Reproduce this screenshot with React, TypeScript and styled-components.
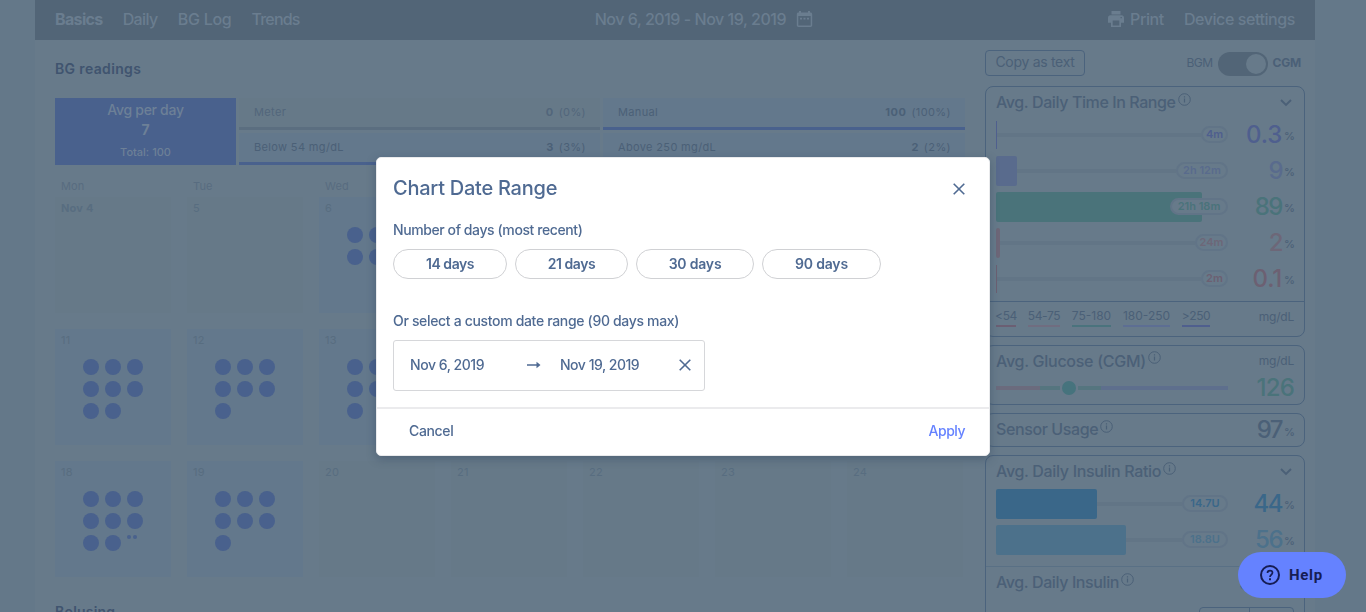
import React from "react";
import styled, { createGlobalStyle } from "styled-components";

const c = {
  page: "#647889",
  panel: "#677a8a",
  header: "#526577",
  headerText: "#6a7d8f",
  ink: "#4b6077",
  heading: "#40546f",
  muted: "#586c80",
  blue: "#49618d",
  tint: "#63788c",
  empty: "#667988",
  line: "#617487",
  border: "#4b637d",
  modal: "#4f6a92",
};

const Global = createGlobalStyle`
  * { box-sizing: border-box; }
  html, body { margin: 0; height: 612px; overflow: hidden; background: ${c.page}; }
  body { font-family: Inter, "Liberation Sans", sans-serif; color: ${c.ink}; }
  button { font: inherit; color: inherit; background: none; border: 0; padding: 0; margin: 0; }
`;

const Text = styled.span<{ $s?: number; $w?: number; $ls?: number; $c?: string; $lh?: number; $up?: number }>`
  font-size: ${(p) => p.$s ?? 14}px;
  font-weight: ${(p) => p.$w ?? 400};
  letter-spacing: ${(p) => p.$ls ?? 0}px;
  line-height: ${(p) => p.$lh ?? 20}px;
  color: ${(p) => p.$c ?? "inherit"};
  padding-bottom: ${(p) => (p.$up ?? 0) * 2}px;
  white-space: nowrap;
  display: block;
`;

const Shell = styled.div`
  width: 1280px;
  height: 612px;
  margin-left: 35px;
  background: ${c.panel};
  overflow: hidden;
`;

const Header = styled.header`
  height: 40px;
  padding: 0 20px;
  display: flex;
  justify-content: space-between;
  align-items: center;
  background: ${c.header};
  color: ${c.headerText};
`;
const Nav = styled.nav`
  display: flex;
  align-items: center;
  gap: 20px;
`;
const DateNav = styled.div`
  display: flex;
  align-items: center;
  gap: 10px;
  svg { margin-bottom: 3px; }
`;
const PrintLink = styled.div`
  display: flex;
  align-items: center;
  gap: 6px;
  svg { margin-bottom: 2px; }
`;

const Body = styled.div`
  display: grid;
  grid-template-columns: 910px 320px;
  column-gap: 20px;
  padding: 0 10px 0 20px;
`;
const Main = styled.main`
  display: flex;
  flex-direction: column;
`;
const Section = styled.h2<{ $top: number }>`
  margin: ${(p) => p.$top}px 0 19px;
  font-weight: inherit;
`;
const Stats = styled.div`
  display: grid;
  grid-template-columns: 181px 361px 362px;
  grid-template-rows: 32px 32px;
  gap: 3px;
`;
const Average = styled.div`
  grid-row: span 2;
  display: flex;
  flex-direction: column;
  align-items: center;
  padding-top: 2px;
  background: ${c.blue};
  color: #6d8097;
`;
const Stat = styled.div<{ $off?: boolean }>`
  display: flex;
  align-items: center;
  justify-content: space-between;
  padding: 0 14px 1px 15px;
  border-bottom: 3px solid ${(p) => (p.$off ? "#5b6e80" : c.blue)};
  background: ${(p) => (p.$off ? c.empty : c.tint)};
  color: ${(p) => (p.$off ? "#52667b" : c.ink)};
`;
const StatValue = styled.div`
  display: flex;
  gap: 5px;
`;
const Week = styled.div`
  display: grid;
  grid-template-columns: repeat(7, 116px);
  column-gap: 16px;
`;
const DayNames = styled(Week)`
  margin-top: 13px;
  height: 19px;
  padding-left: 6px;
  color: ${c.muted};
`;
const Weeks = styled.div`
  display: grid;
  row-gap: 16px;
`;
const Day = styled.div<{ $on: boolean }>`
  height: 116px;
  padding: 3px 6px;
  background: ${(p) => (p.$on ? c.tint : c.empty)};
  color: #586d80;
`;
const Dots = styled.div`
  display: grid;
  grid-template-columns: repeat(3, 16px);
  gap: 6px;
  margin: 11px 0 0 22px;
`;
const Dot = styled.i`
  width: 16px;
  height: 16px;
  border-radius: 50%;
  background: ${c.blue};
`;
const MiniDots = styled.div`
  display: flex;
  gap: 2px;
`;
const MiniDot = styled(Dot)`
  width: 4px;
  height: 4px;
`;

const Side = styled.aside`
  display: flex;
  flex-direction: column;
  gap: 8px;
  padding-top: 10px;
`;
const Tools = styled.div`
  display: flex;
  justify-content: space-between;
  height: 28px;
  padding-right: 4px;
`;
const CopyButton = styled.button`
  width: 100px;
  height: 26px;
  border: 1px solid ${c.border};
  border-radius: 4px;
  display: flex;
  align-items: center;
  justify-content: center;
`;
const SwitchRow = styled.div`
  display: flex;
  align-items: center;
  gap: 5px;
  height: 26px;
`;
const Track = styled.div`
  width: 50px;
  height: 24px;
  margin-top: 2px;
  border-radius: 12px;
  padding: 2px;
  display: flex;
  justify-content: flex-end;
  background: ${c.header};
`;
const Knob = styled.i`
  width: 20px;
  height: 20px;
  border-radius: 50%;
  background: ${c.panel};
`;
const Card = styled.section<{ $h: number }>`
  height: ${(p) => p.$h}px;
  flex: none;
  border: 1px solid ${c.border};
  border-radius: 8px;
`;
const CardHead = styled.div<{ $h?: number; $r?: number }>`
  height: ${(p) => p.$h ?? 32}px;
  padding: 0 ${(p) => p.$r ?? 10}px 0 10px;
  display: flex;
  align-items: center;
  justify-content: space-between;
`;
const TitleWrap = styled.div`
  display: flex;
  align-items: center;
  gap: 2px;
  svg { margin-bottom: 7px; }
`;
const Bars = styled.div`
  display: grid;
  row-gap: 6px;
  padding: 0 10px;
`;
const BarRow = styled.div`
  height: 30px;
  display: grid;
  grid-template-columns: 232px 1fr;
`;
const BarTrack = styled.div`
  display: flex;
  align-items: center;
`;
const BarFill = styled.div<{ $w: number; $c: string }>`
  width: ${(p) => p.$w}px;
  height: ${(p) => (p.$w < 2 ? 28 : 30)}px;
  flex: none;
  border-radius: ${(p) => (p.$w < 2 ? 0 : 2)}px;
  background: ${(p) => p.$c};
`;
const BarLine = styled.div`
  flex: 1;
  height: 4px;
  background: #627586;
`;
const Pill = styled.div<{ $w: number; $over: number; $c: string }>`
  width: ${(p) => p.$w}px;
  height: 17px;
  margin-left: ${(p) => -p.$over}px;
  flex: none;
  border: 2px solid ${c.line};
  border-radius: 9px;
  background: ${c.panel};
  color: ${(p) => p.$c};
  display: flex;
  align-items: center;
  justify-content: center;
`;
const Value = styled.div<{ $c: string }>`
  display: flex;
  justify-content: flex-end;
  color: ${(p) => p.$c};
`;
const PercentSign = styled(Text)`
  width: 10px;
  margin-left: 2px;
  padding-top: 7px;
`;
const Legend = styled.div`
  margin-top: 8px;
  height: 34px;
  padding: 5px 10px 0;
  border-top: 1px solid ${c.border};
  display: flex;
  gap: 12px;
`;
const LegendItem = styled.div<{ $c: string; $w: number }>`
  width: ${(p) => p.$w}px;
  height: 20px;
  border-bottom: 2px solid ${(p) => p.$c};
  display: flex;
  justify-content: center;
`;
const LegendUnit = styled.div`
  margin-left: auto;
`;
const GlucoseRow = styled.div`
  height: 24px;
  padding: 0 10px;
  display: flex;
  align-items: center;
  justify-content: space-between;
`;
const Scale = styled.div`
  width: 232px;
  display: flex;
  align-items: center;
`;
const Segment = styled.i<{ $w: number; $c: string }>`
  width: ${(p) => p.$w}px;
  height: 4px;
  background: ${(p) => p.$c};
`;
const Marker = styled.i`
  width: 14px;
  height: 14px;
  margin: 0 2px;
  border-radius: 50%;
  background: #46737d;
`;
const Insulin = styled.div`
  margin-top: 12px;
  border-top: 1px solid #597085;
`;
const UnitToggle = styled.div`
  width: 95px;
  height: 24px;
  margin: 8px 10px 0 auto;
  border: 1px solid ${c.border};
  border-radius: 4px;
  display: flex;
  justify-content: center;
  &::after { content: ""; border-left: 1px solid ${c.border}; margin-left: 5px; }
`;

const Overlay = styled.div`
  position: fixed;
  inset: 0;
  display: flex;
  justify-content: center;
  align-items: flex-start;
  padding-top: 157px;
`;
const Dialog = styled.div`
  width: 614px;
  height: 299px;
  background: #fff;
  border: 1px solid #e9eaec;
  border-radius: 5px;
  box-shadow: 0 3px 10px rgba(35, 55, 80, 0.35);
  color: ${c.modal};
  display: flex;
  flex-direction: column;
`;
const DialogHead = styled.div`
  height: 62px;
  padding: 0 24px 0 16px;
  display: flex;
  align-items: center;
  justify-content: space-between;
`;
const DialogBody = styled.div`
  padding: 0 16px;
  height: 187px;
`;
const Presets = styled.div`
  display: flex;
  gap: 8px;
  margin: 9px 0 32px;
`;
const Preset = styled.button<{ $w: number }>`
  width: ${(p) => p.$w}px;
  height: 30px;
  border: 1px solid #d0d1d4;
  border-radius: 15px;
  display: flex;
  align-items: center;
  justify-content: center;
`;
const RangeInput = styled.div`
  width: 312px;
  height: 51px;
  margin-top: 9px;
  padding: 0 13px 1px 16px;
  border: 1px solid #d6d7da;
  border-radius: 3px;
  display: grid;
  grid-template-columns: 117px 33px 1fr auto;
  align-items: center;
`;
const DialogFoot = styled.div`
  height: 48px;
  padding: 0 24px 0 32px;
  border-top: 2px solid #ebebed;
  display: flex;
  align-items: center;
  justify-content: space-between;
`;
const HelpButton = styled.button`
  && { background: #6582ff; color: #161d54; padding-left: 22px; }
  position: fixed;
  right: 20px;
  bottom: 14px;
  width: 108px;
  height: 46px;
  border-radius: 23px;
  display: flex;
  align-items: center;
  gap: 9px;
  span { font-family: Roboto, sans-serif; }
`;

const CloseIcon = () => (
  <svg width="12" height="12" viewBox="0 0 12 12" fill="none" stroke={c.modal} strokeWidth="1.6">
    <path d="M.7.7 11.3 11.3M11.3.7.7 11.3" />
  </svg>
);
const ArrowIcon = () => (
  <svg width="14" height="8" viewBox="0 0 14 8" fill={c.modal}>
    <path d="M0 3.300h9.500V.8L13.500 4 9.500 7.200V4.700H0z" />
  </svg>
);
const CalendarIcon = () => (
  <svg width="17" height="18" viewBox="0 0 17 18" fill={c.headerText}>
    <path fillRule="evenodd" d="M3 1h2v1.500h7V1h2v1.500h.5c1 0 1.700.7 1.700 1.700v11.100c0 1-.7 1.700-1.700 1.700h-12c-1 0-1.700-.7-1.700-1.700V4.200c0-1 .7-1.700 1.700-1.700H3zM2.300 6v9.400h12.400V6z" />
    <path d="M4 7.800h2v1.600H4zm3.500 0h2v1.600h-2zm3.500 0h2v1.600h-2z" />
  </svg>
);
const PrintIcon = () => (
  <svg width="16" height="16" viewBox="0 0 16 16">
    <path fill={c.headerText} d="M3.500 0h9v3.400h-9zM2.500 4.300h11A2.500 2.500 0 0 1 16 6.800v5h-3V16H3v-4.200H0v-5a2.500 2.500 0 0 1 2.500-2.500z" />
    <path fill={c.header} d="M4.700 9.500h6.600v5H4.700zM12.500 6h1.400v1.300h-1.400z" />
  </svg>
);
const InfoIcon = () => (
  <svg width="13" height="13" viewBox="0 0 13 13" fill="none" stroke={c.ink}>
    <circle cx="6.500" cy="6.500" r="5.800" />
    <path d="M6.500 5.600v4M6.500 3.200v1.300" strokeWidth="1.200" />
  </svg>
);
const ChevronIcon = () => (
  <svg width="12" height="8" viewBox="0 0 12 8" fill="none" stroke={c.ink} strokeWidth="1.900">
    <path d="m1 1 5 5 5-5" />
  </svg>
);
const HelpIcon = () => (
  <svg width="20" height="20" viewBox="0 0 20 20" fill="none" stroke="#161d54" strokeWidth="2">
    <circle cx="10" cy="10" r="9" />
    <path d="M7.500 8c0-1.500 1.100-2.400 2.500-2.400s2.500.9 2.500 2.200c0 1.900-2.500 2-2.500 4.100" strokeWidth="1.700" />
    <path d="M10 13.300v1.900" />
  </svg>
);

const CardTitle = ({ children, ls = -0.4, up = 1 }: { children: string; ls?: number; up?: number }) => (
  <TitleWrap>
    <Text $s={16} $w={500} $ls={ls} $up={up}>{children}</Text>
    <InfoIcon />
  </TitleWrap>
);
const Percent = ({ value, color, ls = -1.5, lh = 31 }: { value: string; color: string; ls?: number; lh?: number }) => (
  <Value $c={color}>
    <Text $s={24} $w={500} $lh={lh} $ls={ls}>{value}</Text>
    <PercentSign $s={11} $w={500} $c={c.ink} $lh={lh - 10}>%</PercentSign>
  </Value>
);

type Bar = { w: number; color: string; label: string; value: string; pill: number; over?: number; ls?: number };
const ranges: Bar[] = [
  { w: 1, color: "#4f5f8e", label: "4m", value: "0.3", pill: 27, ls: -0.2 },
  { w: 21, color: "#596b8d", label: "2h 12m", value: "9", pill: 52 },
  { w: 206, color: "#4a737a", label: "21h 18m", value: "89", pill: 58, over: 32 },
  { w: 4, color: "#6d6778", label: "24m", value: "2", pill: 33 },
  { w: 1, color: "#6c6072", label: "2m", value: "0.1", pill: 27, ls: -0.2 },
];
const insulin: Bar[] = [
  { w: 101, color: "#3a6789", label: "14.7U", value: "44", pill: 46 },
  { w: 130, color: "#4c718b", label: "18.8U", value: "56", pill: 46 },
];
const BarList = ({ items }: { items: Bar[] }) => (
  <Bars>
    {items.map((b) => (
      <BarRow key={b.label}>
        <BarTrack>
          <BarFill $w={b.w} $c={b.color} />
          {!b.over && <BarLine />}
          <Pill $w={b.pill} $over={b.over ?? 0} $c={b.color}>
            <Text $s={11} $w={600} $lh={13}>{b.label}</Text>
          </Pill>
        </BarTrack>
        <Percent value={b.value} color={b.color} ls={b.ls} />
      </BarRow>
    ))}
  </Bars>
);

const days = [
  ["Nov 4", 0], ["5", 0], ["6", 6], ["7", 7], ["8", 7], ["9", 7], ["10", 7],
  ["11", 8], ["12", 7], ["13", 7], ["14", 7], ["15", 7], ["16", 7], ["17", 7],
  ["18", 8], ["19", 7], ["20", 0], ["21", 0], ["22", 0], ["23", 0], ["24", 0],
] as [string, number][];

const stats = [
  ["Meter", "0", "(0%)"],
  ["Manual", "100", "(100%)"],
  ["Below 54 mg/dL", "3", "(3%)"],
  ["Above 250 mg/dL", "2", "(2%)"],
];

const legend: [string, number, string][] = [
  ["<54", 20, "#6b5f73"],
  ["54-75", 32, "#706d80"],
  ["75-180", 39, "#4a737d"],
  ["180-250", 47, "#5d6e93"],
  [">250", 28, "#4f5f8e"],
];

export default function App() {
  return (
    <>
      <Global />
      <Shell>
        <Header>
          <Nav>
            <Text $s={16} $w={700} $ls={-0.65} $up={1}>Basics</Text>
            <Text $s={16} $w={500} $ls={-0.6} $up={1}>Daily</Text>
            <Text $s={16} $w={500} $ls={-0.25} $up={1}>BG Log</Text>
            <Text $s={16} $w={500} $ls={-0.8} $up={1}>Trends</Text>
          </Nav>
          <DateNav>
            <Text $s={16} $w={500} $ls={-0.46} $up={1}>Nov 6, 2019 - Nov 19, 2019</Text>
            <CalendarIcon />
          </DateNav>
          <Nav>
            <PrintLink>
              <PrintIcon />
              <Text $s={16} $w={500} $ls={-0.4} $up={1}>Print</Text>
            </PrintLink>
            <Text $s={16} $w={500} $ls={-0.42} $up={1}>Device settings</Text>
          </Nav>
        </Header>
        <Body>
          <Main>
            <Section $top={19}><Text $s={14} $w={600} $ls={0.35} $c={c.heading}>BG readings</Text></Section>
            <Stats>
              <Average>
                <Text $s={14} $w={500} $lh={20} $ls={-0.3}>Avg per day</Text>
                <Text $s={14} $w={700} $lh={19}>7</Text>
                <Text $s={11} $w={500} $lh={26}>Total: 100</Text>
              </Average>
              {stats.map(([name, count, pct], i) => (
                <Stat key={name} $off={i === 0}>
                  <Text $s={11} $ls={0.35}>{name}</Text>
                  <StatValue>
                    <Text $s={11} $w={700} $ls={0.5}>{count}</Text>
                    <Text $s={11} $ls={0.4}>{pct}</Text>
                  </StatValue>
                </Stat>
              ))}
            </Stats>
            <DayNames>
              {["Mon", "Tue", "Wed", "Thu", "Fri", "Sat", "Sun"].map((d) => (
                <Text key={d} $s={11} $lh={17} $ls={0.1}>{d}</Text>
              ))}
            </DayNames>
            <Weeks>
              {[0, 1, 2].map((w) => (
                <Week key={w}>
                  {days.slice(w * 7, w * 7 + 7).map(([label, count], i) => (
                    <Day key={label} $on={count > 0}>
                      <Text $s={11} $w={w + i === 0 ? 700 : 400} $lh={16} $ls={0.2}>{label}</Text>
                      <Dots>
                        {Array.from({ length: count }, (_, k) => <Dot key={k} />)}
                        {label === "18" && <MiniDots><MiniDot /><MiniDot /></MiniDots>}
                      </Dots>
                    </Day>
                  ))}
                </Week>
              ))}
            </Weeks>
            <Section $top={25}><Text $s={14} $w={600} $ls={0.2} $c={c.heading}>Bolusing</Text></Section>
          </Main>
          <Side>
            <Tools>
              <CopyButton><Text $s={14} $ls={-0.3} $up={1}>Copy as text</Text></CopyButton>
              <SwitchRow>
                <Text $s={12} $ls={-0.5}>BGM</Text>
                <Track><Knob /></Track>
                <Text $s={12} $w={700} $ls={-0.2}>CGM</Text>
              </SwitchRow>
            </Tools>
            <Card $h={251}>
              <CardHead $r={12}>
                <CardTitle>Avg. Daily Time In Range</CardTitle>
                <ChevronIcon />
              </CardHead>
              <BarList items={ranges} />
              <Legend>
                {legend.map(([label, w, color]) => (
                  <LegendItem key={label} $c={color} $w={w}><Text $s={12} $lh={18} $ls={label.length < 6 ? -0.4 : 0}>{label}</Text></LegendItem>
                ))}
                <LegendUnit><Text $s={12} $lh={19} $ls={-0.2}>mg/dL</Text></LegendUnit>
              </Legend>
            </Card>
            <Card $h={60}>
              <CardHead $h={30}>
                <CardTitle ls={-0.28} up={0}>Avg. Glucose (CGM)</CardTitle>
                <Text $s={12} $ls={-0.2}>mg/dL</Text>
              </CardHead>
              <GlucoseRow>
                <Scale>
                  <Segment $w={44} $c="#6b6b7d" />
                  <Segment $w={20} $c="#55757f" />
                  <Marker />
                  <Segment $w={23} $c="#55757f" />
                  <Segment $w={127} $c="#5e6f8d" />
                </Scale>
                <Text $s={24} $w={500} $c="#4a737a" $ls={-0.8}>126</Text>
              </GlucoseRow>
            </Card>
            <Card $h={34}>
              <CardHead>
                <CardTitle>Sensor Usage</CardTitle>
                <Percent value="97" color={c.ink} lh={28} />
              </CardHead>
            </Card>
            <Card $h={200}>
              <CardHead $r={12}>
                <CardTitle ls={-0.33}>Avg. Daily Insulin Ratio</CardTitle>
                <ChevronIcon />
              </CardHead>
              <BarList items={insulin} />
              <Insulin>
                <CardHead>
                  <CardTitle>Avg. Daily Insulin</CardTitle>
                  <Text $s={21} $w={500} $c="#3a6789" $ls={-1.1}>33.5U</Text>
                </CardHead>
                <UnitToggle />
              </Insulin>
            </Card>
          </Side>
        </Body>
      </Shell>
      <Overlay>
        <Dialog role="dialog">
          <DialogHead>
            <Text $s={20} $w={500} $ls={-0.25} $up={1}>Chart Date Range</Text>
            <CloseIcon />
          </DialogHead>
          <DialogBody>
            <Text $w={500} $ls={-0.41}>Number of days (most recent)</Text>
            <Presets>
              {([["14 days", 114], ["21 days", 113], ["30 days", 118], ["90 days", 119]] as [string, number][]).map(([label, w]) => (
                <Preset key={label} $w={w}><Text $w={600} $ls={w < 115 ? -0.45 : -0.2} $up={0.5}>{label}</Text></Preset>
              ))}
            </Presets>
            <Text $w={500} $ls={-0.33}>Or select a custom date range (90 days max)</Text>
            <RangeInput>
              <Text $w={500} $ls={-0.45}>Nov 6, 2019</Text>
              <ArrowIcon />
              <Text $w={500} $ls={-0.48}>Nov 19, 2019</Text>
              <CloseIcon />
            </RangeInput>
          </DialogBody>
          <DialogFoot>
            <Text $w={500} $ls={-0.35} $up={1}>Cancel</Text>
            <Text $w={500} $ls={-0.5} $c="#6582ff" $up={1}>Apply</Text>
          </DialogFoot>
        </Dialog>
      </Overlay>
      <HelpButton>
        <HelpIcon />
        <Text $s={15} $w={700} $ls={0.7}>Help</Text>
      </HelpButton>
    </>
  );
}
